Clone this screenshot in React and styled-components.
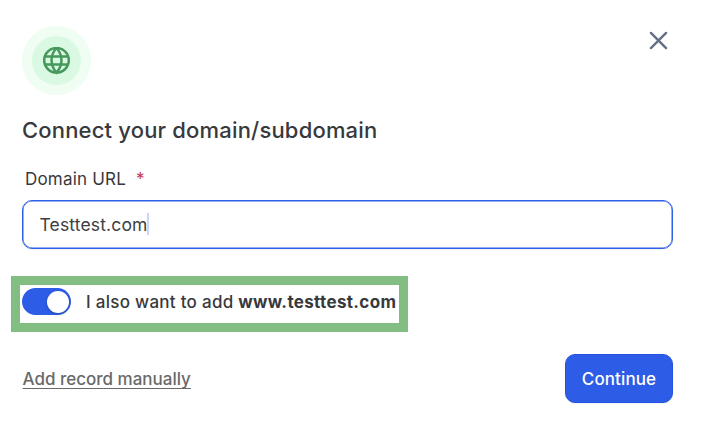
import React from 'react'
import styled, { createGlobalStyle } from 'styled-components'

function App() {
    const [domain, setDomain] = React.useState('Testtest.com')
    const [addWww, setAddWww] = React.useState(true)

    return (
        <>
            <GlobalStyle />
            <ModalStyled>
                <ModalHeader>
                    <IconBadge>
                        <GlobeIcon />
                    </IconBadge>
                    <CloseButton type="button" aria-label="Close">
                        <svg width="19" height="19" viewBox="0 0 19 19" fill="none" stroke="currentColor" strokeWidth="2.4" strokeLinecap="round">
                            <path d="M1.9 1.9L17.1 17.1M17.1 1.9L1.9 17.1" />
                        </svg>
                    </CloseButton>
                </ModalHeader>
                <Title>Connect your domain/subdomain</Title>
                <Label htmlFor="domain">Domain URL<Required>*</Required></Label>
                <InputControl>
                    <Sizer>
                        <span>{domain}</span>
                        <input id="domain" type="text" size="1" value={domain} onChange={(e) => setDomain(e.target.value)} />
                    </Sizer>
                    <Caret />
                </InputControl>
                <Highlight>
                    <Switch type="button" role="switch" aria-checked={addWww} $on={addWww} onClick={() => setAddWww(!addWww)}>
                        <Knob />
                    </Switch>
                    <SwitchText>I also want to add <strong>www.{domain.toLowerCase()}</strong></SwitchText>
                </Highlight>
                <ModalFooter>
                    <ManualLink href="#">Add record manually</ManualLink>
                    <ContinueButton type="button">Continue</ContinueButton>
                </ModalFooter>
            </ModalStyled>
        </>
    )
}

function GlobeIcon() {
    return (
        <svg width="28" height="28" viewBox="0 0 28 28" fill="none" stroke="#46985c" strokeWidth="2.5">
            <circle cx="13.5" cy="13.3" r="12.3" />
            <path d="M13.5 1C6.9 8 6.9 18.6 13.5 25.6C20.1 18.6 20.1 8 13.5 1Z" />
            <path d="M1.8 9.6H25.2M1.8 17.4H25.2" />
        </svg>
    )
}

const GlobalStyle = createGlobalStyle`
  * {
    box-sizing: border-box;
  }

  body {
    margin: 0;
    background: #fff;
    font-family: Inter, "Liberation Sans", sans-serif;
    color: #38393d;
  }

  button, input {
    font: inherit;
    letter-spacing: inherit;
  }
`;

const ModalStyled = styled.main`
  height: 431px;
  padding: 26px 54px 0 22px;
  display: flex;
  flex-direction: column;
  background: #fff;
`;

const ModalHeader = styled.header`
  display: flex;
  align-items: flex-start;
  justify-content: space-between;
`;

const IconBadge = styled.div`
  width: 69px;
  height: 69px;
  display: flex;
  align-items: center;
  justify-content: center;
  border: 10px solid #effdf3;
  border-radius: 50%;
  background: #daf9e2;

  svg {
    flex: none;
  }
`;

const CloseButton = styled.button`
  display: flex;
  margin: 5px 5px 0 0;
  padding: 0;
  border: none;
  background: none;
  color: #667085;
  cursor: pointer;
`;

const Title = styled.h1`
  margin: 20px 0 0;
  font-size: 22px;
  font-weight: 500;
  line-height: 30px;
  letter-spacing: 0.18px;
`;

const Label = styled.label`
  margin: 22px 0 0 3px;
  font-size: 17px;
  line-height: 24px;
  letter-spacing: 0.2px;
`;

const Required = styled.span`
  margin-left: 10px;
  color: #c2344d;
`;

const InputControl = styled.div`
  height: 49px;
  margin-top: 9px;
  padding: 0 17px 0 16.5px;
  display: flex;
  align-items: center;
  border: 1px solid #2e5fe8;
  border-radius: 10px;
  box-shadow: inset 0 0 0 0.5px #2e5fe8, 0 1px 2px rgba(16, 24, 40, 0.06);
  font-size: 17.5px;
  letter-spacing: 0.15px;
`;

/* the hidden span keeps the field as wide as its value */
const Sizer = styled.div`
  display: grid;

  span, input {
    grid-area: 1 / 1;
  }

  span {
    visibility: hidden;
  }

  input {
    width: 100%;
    min-width: 0;
    padding: 0;
    border: none;
    outline: none;
    background: none;
    color: #3d3e42;
  }
`;

const Caret = styled.i`
  width: 2px;
  height: 22px;
  margin: -1px 0 0 -1px;
  background: #c9d7fb;
`;

const Highlight = styled.div`
  align-self: flex-start;
  width: 397px;
  height: 56px;
  margin: 27px 0 0 -11px;
  padding: 0 0 5px 2px;
  display: flex;
  align-items: center;
  border: 9px solid #82bd82;
`;

const Switch = styled.button`
  flex: none;
  width: 49px;
  height: 27px;
  padding: 2px;
  display: flex;
  align-items: center;
  justify-content: ${(props) => (props.$on ? 'flex-end' : 'flex-start')};
  border: none;
  border-radius: 14px;
  background: ${(props) => (props.$on ? '#2d5de6' : '#d0d5dd')};
  cursor: pointer;
`;

const Knob = styled.span`
  width: 22px;
  height: 22px;
  border-radius: 50%;
  background: #fff;
  box-shadow: 0 1px 3px rgba(16, 24, 40, 0.3);
`;

const SwitchText = styled.span`
  margin-left: 15px;
  font-size: 17px;
  font-weight: 500;
  letter-spacing: 0.28px;
  white-space: nowrap;

  strong {
    font-weight: 700;
    letter-spacing: 0.33px;
  }
`;

const ModalFooter = styled.footer`
  margin-top: 22px;
  display: flex;
  align-items: center;
  justify-content: space-between;
  font-size: 17px;
`;

const ManualLink = styled.a`
  margin-left: 0.5px;
  color: #696969;
  font-weight: 500;
  text-decoration: underline;
  text-decoration-thickness: 1px;
  text-underline-offset: 3px;
  text-decoration-skip-ink: none;
`;

const ContinueButton = styled.button`
  width: 108px;
  height: 49px;
  padding: 0;
  border: 1px solid #2352e0;
  border-radius: 10px;
  background: #2d5de6;
  box-shadow: 0 1px 2px rgba(16, 24, 40, 0.06);
  color: #fff;
  font-weight: 500;
  letter-spacing: 0.1px;
  cursor: pointer;
`;

export default App
